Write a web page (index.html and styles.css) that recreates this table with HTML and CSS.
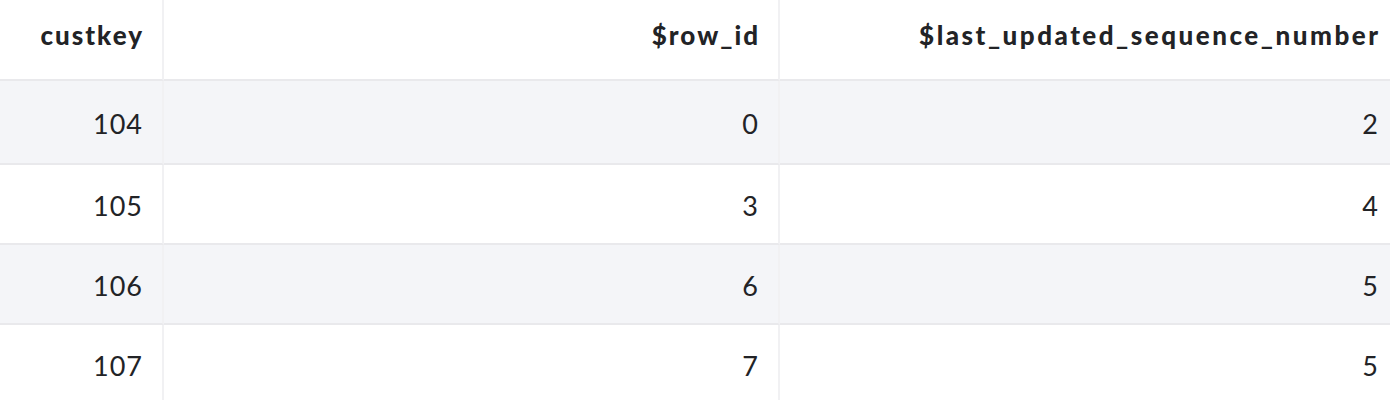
FILE: index.html
```html
<!DOCTYPE html>
<html>
<head>
<meta charset="utf-8">
<link rel="stylesheet" href="styles.css">
</head>
<body>
<table class="grid">
  <colgroup>
    <col class="c1"><col class="c2"><col class="c3">
  </colgroup>
  <thead>
    <tr class="head">
      <th>custkey</th>
      <th>$row_id</th>
      <th class="last">$last_updated_sequence_number</th>
    </tr>
  </thead>
  <tbody>
    <tr class="r first alt"><td>104</td><td>0</td><td class="last">2</td></tr>
    <tr class="r"><td>105</td><td>3</td><td class="last">4</td></tr>
    <tr class="r alt"><td>106</td><td>6</td><td class="last">5</td></tr>
    <tr class="r"><td>107</td><td>7</td><td class="last">5</td></tr>
  </tbody>
</table>
</body>
</html>
```
FILE: styles.css
```css
html, body {
  margin: 0;
  padding: 0;
  background: #ffffff;
  overflow: hidden;
}
.grid {
  width: 1390px;
  table-layout: fixed;
  border-collapse: separate;
  border-spacing: 0;
  font-family: "Lato", "Liberation Sans", sans-serif;
  color: #222326;
}
.c1 { width: 164px; }
.c2 { width: 616px; }
.c3 { width: 610px; }
.grid th, .grid td {
  text-align: right;
  padding: 0 20px 0 0;
  border-right: 2px solid #f1f1f3;
  border-bottom: 2px solid #e9e9ec;
  vertical-align: middle;
  white-space: nowrap;
  box-sizing: border-box;
}
.grid th.last, .grid td.last {
  border-right: none;
}
.grid th {
  height: 81px;
  font-weight: 900;
  font-size: 26px;
  letter-spacing: 2px;
  padding-right: 18px;
  padding-bottom: 10px;
}
.grid th.last {
  letter-spacing: 2.5px;
  padding-right: 9.5px;
}
.grid td {
  height: 80px;
  font-weight: 400;
  font-size: 27px;
  letter-spacing: 1px;
  padding-top: 3px;
  padding-right: 19px;
}
.grid td.last {
  padding-right: 11px;
}
.grid tr.first td {
  height: 84px;
}
.grid tr.alt td {
  background: #f4f5f8;
}
```
